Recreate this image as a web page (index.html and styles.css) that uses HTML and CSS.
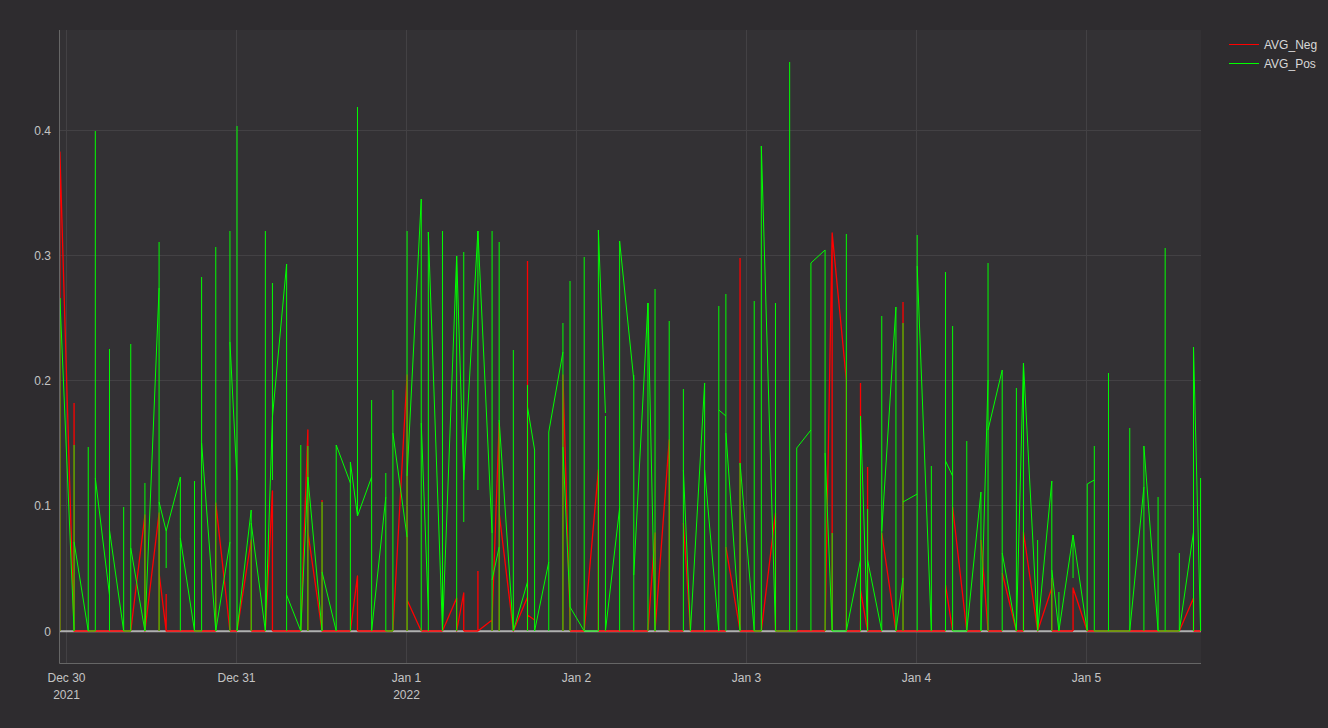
FILE: index.html
```html
<!DOCTYPE html>
<html lang="en">
  <head>
    <meta charset="UTF-8">
    <meta name="viewport" content="width=device-width, initial-scale=1.0">
    <title>AVG_Neg / AVG_Pos</title>
    <link rel="stylesheet" href="styles.css">
  </head>
  <body>
    <svg class="chart" width="1210" height="728" viewBox="0 0 1210 728">
      <rect class="plot-bg" x="59" y="30" width="1142" height="633"></rect>

      <g class="grid">
        <path d="M66.5 30V663M236.5 30V663M406.5 30V663M576.5 30V663M746.5 30V663M916.5 30V663M1086.5 30V663"></path>
        <path d="M59 130.5H1201M59 255.5H1201M59 380.5H1201M59 505.5H1201"></path>
      </g>
      <path class="zeroline" d="M59 631.3H1201"></path>

      <!-- x is the hour index here, y stays in pixels -->
      <g transform="translate(59.9 0) scale(7.085 1)">
        <path class="trace neg" d="
          M2 631H10M15 631H22M24 631H25M27 631H29M30 631H34M37 631H41M42 631H47M51 631H54M57 631H59M72 631H74M76 631H83
          M86 631H88M89 631H94M96 631H99M101 631H108M111 631H113M114 631H116M118 631H125M128 631H130M131 631H133M135 631H136
          M140 631H143M145 631H158M160 631H161
          M0 631V152L2 631V403
          M10 631L12 515V631L14 513V631M14 573L15 631V594
          M22 631V503L24 631M25 631L27 540V631M29 631L30 491V631
          M34 631L35 430V631M35 532L37 631V500
          M41 631L42 576V631M47 631L49 375V631M49 600L51 631
          M54 631L56 598V631L57 593V631
          M59 631V571M59 631L61 620V631M61 620L62 423V631M62 513L64 631L66 597M66 631V261M66 615L67 620
          M71 631V375L72 620V631M74 631L76 470V631
          M83 631L84 533V631L86 440V631M88 523L89 631
          M94 547L96 631V258M99 631L101 513V631
          M108 631L109 233V631M109 233L111 380V631
          M113 631V383M113 590L114 631V467M116 533L118 631M119 631V302
          M125 585L126 631M126 507L128 631M130 540L131 631M133 573L135 631
          M136 631V532L138 631L140 588M140 631V578M143 631V588L145 631
          M158 631L160 598V631"></path>

        <!-- spikes up from zero -->
        <path class="trace pos" d="
          M0 631V298M2 631V445M4 631V447M5 631V131M7 631V349M9 631V507M10 631V344M12 631V483M14 631V242M17 631V477
          M19 631V481M20 631V277M22 631V247M24 631V231M25 631V126M27 631V510M29 631V231M32 631V264M34 631V445M35 631V446
          M37 631V502M39 631V445M41 631V462M44 631V400M46 631V473M47 631V390M49 631V231M51 631V199M52 631V232M54 631V231
          M56 631V256M61 631V231M62 631V242M64 631V350M66 631V385M67 631V450M69 631V432M71 631V323M72 631V281M74 631V257
          M76 631V230M77 631V416M79 631V241M81 631V375M83 631V303M84 631V289M86 631V321M88 631V389M91 631V383M93 631V306
          M94 631V294M96 631V463M98 631V301M99 631V146M101 631V303M103 631V62M104 631V448M106 631V263M108 631V250M109 631V533
          M111 631V234M113 631V416M114 631V509M116 631V316M118 631V307M119 631V323M121 631V235M123 631V466M125 631V272
          M126 631V326M128 631V441M130 631V492M131 631V263M133 631V370M135 631V388M136 631V363M138 631V540M140 631V481
          M141 631V592M145 631V484M146 631V446M148 631V373M151 631V428M153 631V446M155 631V497M156 631V248M158 631V553
          M160 631V347M161 631V478
          M15 531V568M30 283V480M42 107V516M57 252V522M59 231V490M143 535V578"></path>

        <!-- slopes and flat runs -->
        <path class="trace pos" d="
          M0 298L2 631M2 542L4 631H5M5 478L7 595M7 530L9 631H10M10 548L12 631L14 288M14 502L15 531L17 477M17 538L19 631H20
          M20 443L22 631L24 542M24 342L25 480M25 631L27 510M27 523L29 631L30 417L32 264M32 595L34 631L35 477L37 631M37 572L39 631
          M39 445L41 483M41 462L42 516L44 477M44 631L46 497M46 631H47M47 433L49 537M49 476L51 199M51 423L52 610M52 232L54 631
          L56 256L57 480L59 231L61 533M61 580L62 547M62 420L64 631L66 582M66 407L67 450M67 631L69 562M69 432L71 352
          M71 447L72 607L74 631H76M76 230L77 413M77 631L79 508M79 241L81 380M81 575L83 303L84 631M88 470L89 631L91 383
          M91 470L93 631M93 410L94 416M94 433L96 631M96 463L98 631H99M99 146L101 631H104M104 448L106 430M106 263L108 250
          M108 453L109 631H111L113 560M113 416L114 631M114 560L116 631M116 531L118 307M118 631L119 578M119 502L121 494
          M121 266L123 631M125 461L126 476M126 631H128L130 492M130 631L131 380M131 430L133 370
          M133 553L135 631L136 363L138 631L140 481M140 570L141 631L143 535L145 631M145 484L146 480
          M146 631H151L153 487M153 446L155 631H158L160 532M160 347L161 631"></path>
      </g>

      <path class="axis-line" d="M59.5 30V663.5H1201"></path>

      <g class="ticks-y">
        <text x="51" y="135">0.4</text>
        <text x="51" y="260">0.3</text>
        <text x="51" y="385">0.2</text>
        <text x="51" y="510">0.1</text>
        <text x="51" y="636">0</text>
      </g>
      <g class="ticks-x">
        <text x="66.5" y="682">Dec 30</text>
        <text x="66.5" y="699">2021</text>
        <text x="236.5" y="682">Dec 31</text>
        <text x="406.5" y="682">Jan 1</text>
        <text x="406.5" y="699">2022</text>
        <text x="576.5" y="682">Jan 2</text>
        <text x="746.5" y="682">Jan 3</text>
        <text x="916.5" y="682">Jan 4</text>
        <text x="1086.5" y="682">Jan 5</text>
      </g>
    </svg>

    <div class="legend">
      <div class="legend-row"><span class="swatch swatch-neg"></span>AVG_Neg</div>
      <div class="legend-row"><span class="swatch swatch-pos"></span>AVG_Pos</div>
    </div>
  </body>
</html>
```

FILE: styles.css
```css
body {
  margin: 0;
  height: 100vh;
  overflow: hidden;
  display: flex;
  background-color: #2e2c2f;
  font-family: "Liberation Sans", Arial, sans-serif;
  font-size: 12px;
  color: #d8d8d8;
}
.chart {
  display: block;
  flex: none;
}
.plot-bg {
  fill: #333134;
}
.grid path {
  fill: none;
  stroke: #434144;
  stroke-width: 1;
}
.zeroline {
  fill: none;
  stroke: #b0b0b0;
  stroke-width: 2;
}
.axis-line {
  fill: none;
  stroke: #666;
  stroke-width: 1;
}
.trace {
  fill: none;
  stroke-linejoin: round;
  vector-effect: non-scaling-stroke;
}
.neg {
  stroke: #ff0000;
  stroke-width: 1.3;
}
.pos {
  stroke: #00ff00;
  stroke-width: 1;
}
.ticks-y text,
.ticks-x text {
  font-size: 12px;
  fill: #c4c4c4;
}
.ticks-y text {
  text-anchor: end;
}
.ticks-x text {
  text-anchor: middle;
}
.legend {
  margin-left: 19px;
  padding-top: 35px;
}
.legend-row {
  display: flex;
  align-items: center;
  gap: 5px;
  height: 19px;
  white-space: nowrap;
}
.swatch {
  width: 30px;
  height: 1px;
}
.swatch-neg {
  background-color: #ff0000;
}
.swatch-pos {
  background-color: #00ff00;
}
```
